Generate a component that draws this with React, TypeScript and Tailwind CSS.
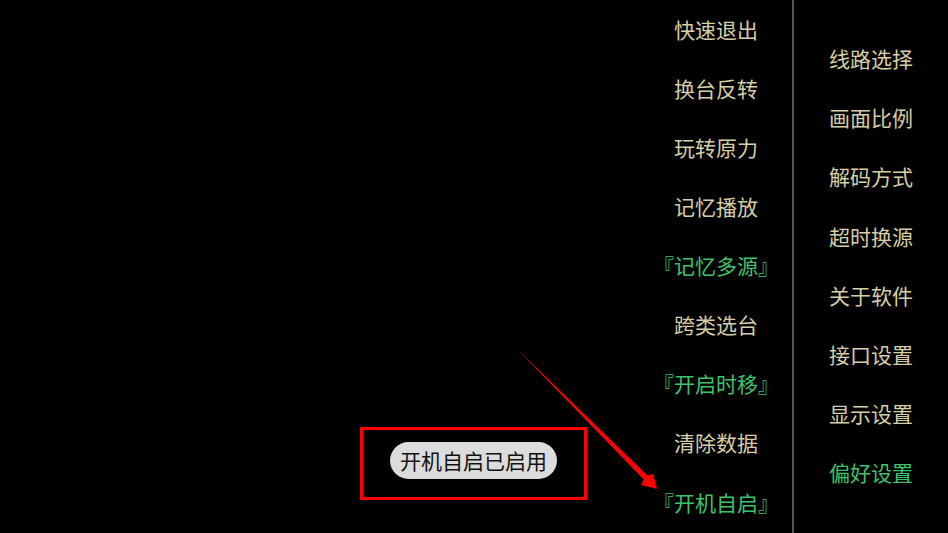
const leftItems = [
  { label: "快速退出" },
  { label: "换台反转" },
  { label: "玩转原力" },
  { label: "记忆播放" },
  { label: "『记忆多源』", on: true },
  { label: "跨类选台" },
  { label: "『开启时移』", on: true },
  { label: "清除数据" },
  { label: "『开机自启』", on: true },
];

const rightItems = [
  { label: "线路选择" },
  { label: "画面比例" },
  { label: "解码方式" },
  { label: "超时换源" },
  { label: "关于软件" },
  { label: "接口设置" },
  { label: "显示设置" },
  { label: "偏好设置", on: true },
];

function MenuItem({ label, on }: { label: string; on?: boolean }) {
  return (
    <div
      className={
        "flex h-[59.1px] shrink-0 items-center justify-center whitespace-nowrap text-[21px] " +
        (on ? "text-[#3ec36a]" : "text-[#d6cea6]")
      }
    >
      {label}
    </div>
  );
}

export default function App() {
  return (
    <div
      className="relative flex h-[533px] w-[948px] overflow-hidden bg-black"
      style={{ fontFamily: '"Noto Sans CJK SC", "Noto Sans", sans-serif' }}
    >
      {/* left empty area with the toast */}
      <div className="relative flex-1">
        <div className="absolute left-[360px] top-[427px] flex h-[73px] w-[227px] items-center justify-center border-[3px] border-[#ff0000] pb-[6px]">
          <div className="flex h-[37px] items-center rounded-full bg-[#dcdcdc] px-[10px] text-[21px] text-[#111]">
            开机自启已启用
          </div>
        </div>
      </div>

      <div className="flex w-[152px] flex-col">
        {leftItems.map((it) => (
          <MenuItem key={it.label} label={it.label} on={it.on} />
        ))}
      </div>

      <div className="w-[2px] bg-[#555]" />

      <div className="flex w-[154px] flex-col pt-[29.5px]">
        {rightItems.map((it) => (
          <MenuItem key={it.label} label={it.label} on={it.on} />
        ))}
      </div>

      {/* annotation arrow */}
      <svg className="pointer-events-none absolute left-0 top-0" width="948" height="533" aria-hidden>
        <polygon
          points="518,350 647.4,475.6 653,474 657,489 641,485 643.6,479.4"
          fill="#ff0000"
        />
      </svg>
    </div>
  );
}
